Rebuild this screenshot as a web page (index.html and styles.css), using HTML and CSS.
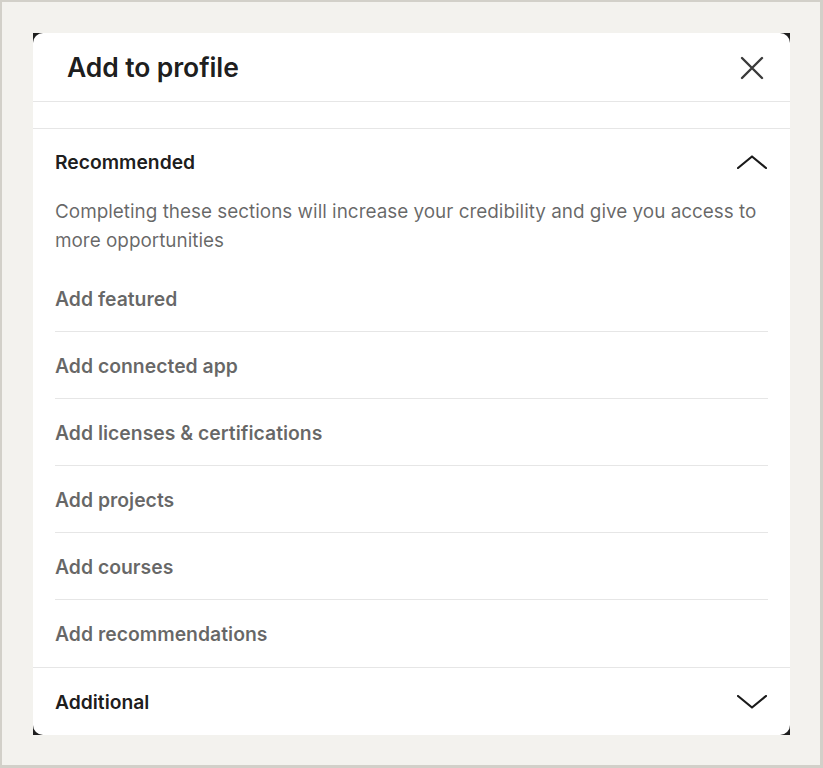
FILE: index.html
```html
<!DOCTYPE html>
<html lang="en">
<head>
<meta charset="utf-8">
<title>Add to profile</title>
<link rel="stylesheet" href="styles.css">
</head>
<body>
<div class="frame">
  <div class="backdrop">
    <div class="modal">
      <header class="modal-header">
        <h2 class="modal-title">Add to profile</h2>
        <button class="close-btn" aria-label="Dismiss">
          <svg width="24" height="24" viewBox="0 0 24 24"><path d="M2 2 L22 22 M22 2 L2 22" stroke="#3a3a3a" stroke-width="2.4" fill="none" stroke-linecap="round"/></svg>
        </button>
      </header>
      <div class="spacer"></div>
      <section class="section section-open">
        <div class="section-head">
          <h3 class="section-title">Recommended</h3>
          <svg class="chev" width="30" height="14" viewBox="0 0 30 14"><polyline points="1,13 15,1.5 29,13" stroke="#1a1a1a" stroke-width="2.2" fill="none" stroke-linecap="round" stroke-linejoin="round"/></svg>
        </div>
        <p class="section-desc">Completing these sections will increase your credibility and give you access to more opportunities</p>
        <ul class="item-list">
          <li class="item">Add featured</li>
          <li class="item">Add connected app</li>
          <li class="item">Add licenses &amp; certifications</li>
          <li class="item">Add projects</li>
          <li class="item">Add courses</li>
          <li class="item">Add recommendations</li>
        </ul>
      </section>
      <section class="section section-closed">
        <div class="section-head">
          <h3 class="section-title">Additional</h3>
          <svg class="chev" width="30" height="14" viewBox="0 0 30 14"><polyline points="1,1 15,12.5 29,1" stroke="#1a1a1a" stroke-width="2.2" fill="none" stroke-linecap="round" stroke-linejoin="round"/></svg>
        </div>
      </section>
    </div>
  </div>
</div>
</body>
</html>
```
FILE: styles.css
```css
* { box-sizing: border-box; }
html, body { margin: 0; padding: 0; }
body {
  font-family: Inter, "Liberation Sans", Arial, sans-serif;
  background: #f3f2ee;
}
.frame {
  width: 823px;
  height: 768px;
  border: 2px solid #d2d0c9;
  border-bottom-width: 3px;
  border-right-width: 3px;
  background: #f3f2ee;
  padding: 31px 30px 0 31px;
}
.backdrop {
  width: 757px;
  height: 702px;
  background: #1e1e1e;
}
.modal {
  width: 757px;
  height: 702px;
  background: #fff;
  border-radius: 10px;
  overflow: hidden;
  display: flex;
  flex-direction: column;
}
.modal-header {
  height: 69px;
  flex: none;
  display: flex;
  align-items: center;
  justify-content: space-between;
  padding: 0 26px 0 34px;
  border-bottom: 1px solid #e6e6e6;
}
.modal-title {
  margin: 0;
  font-size: 26.5px;
  font-weight: 600;
  color: rgba(0,0,0,0.9);
  letter-spacing: -0.1px;
}
.close-btn {
  border: 0;
  background: none;
  padding: 0;
  width: 24px;
  height: 24px;
  display: flex;
  margin-top: 1px;
}
.spacer {
  height: 27px;
  flex: none;
  border-bottom: 1px solid #e6e6e6;
}
.section {
  padding: 21px 22px 0 22px;
}
.section-closed { padding-top: 22px; }
.section-open {
  border-bottom: 1px solid #e6e6e6;
}
.section-head {
  display: flex;
  align-items: center;
  justify-content: space-between;
  height: 24px;
}
.chev { margin-right: 1px; }
.section-title {
  margin: 0;
  font-size: 19.3px;
  font-weight: 600;
  line-height: 24px;
  color: rgba(0,0,0,0.9);
}
.section-desc {
  margin: 23px 0 10px;
  font-size: 18.9px;
  line-height: 29px;
  color: rgba(0,0,0,0.6);
}
.item-list {
  list-style: none;
  margin: 0;
  padding: 0;
}
.item {
  padding: 22px 0 20px;
  line-height: 24px;
  font-size: 19.4px;
  font-weight: 600;
  color: rgba(0,0,0,0.6);
  border-bottom: 1px solid #e6e6e6;
}
.item:last-child { border-bottom: 0; padding-bottom: 21px; }
```
